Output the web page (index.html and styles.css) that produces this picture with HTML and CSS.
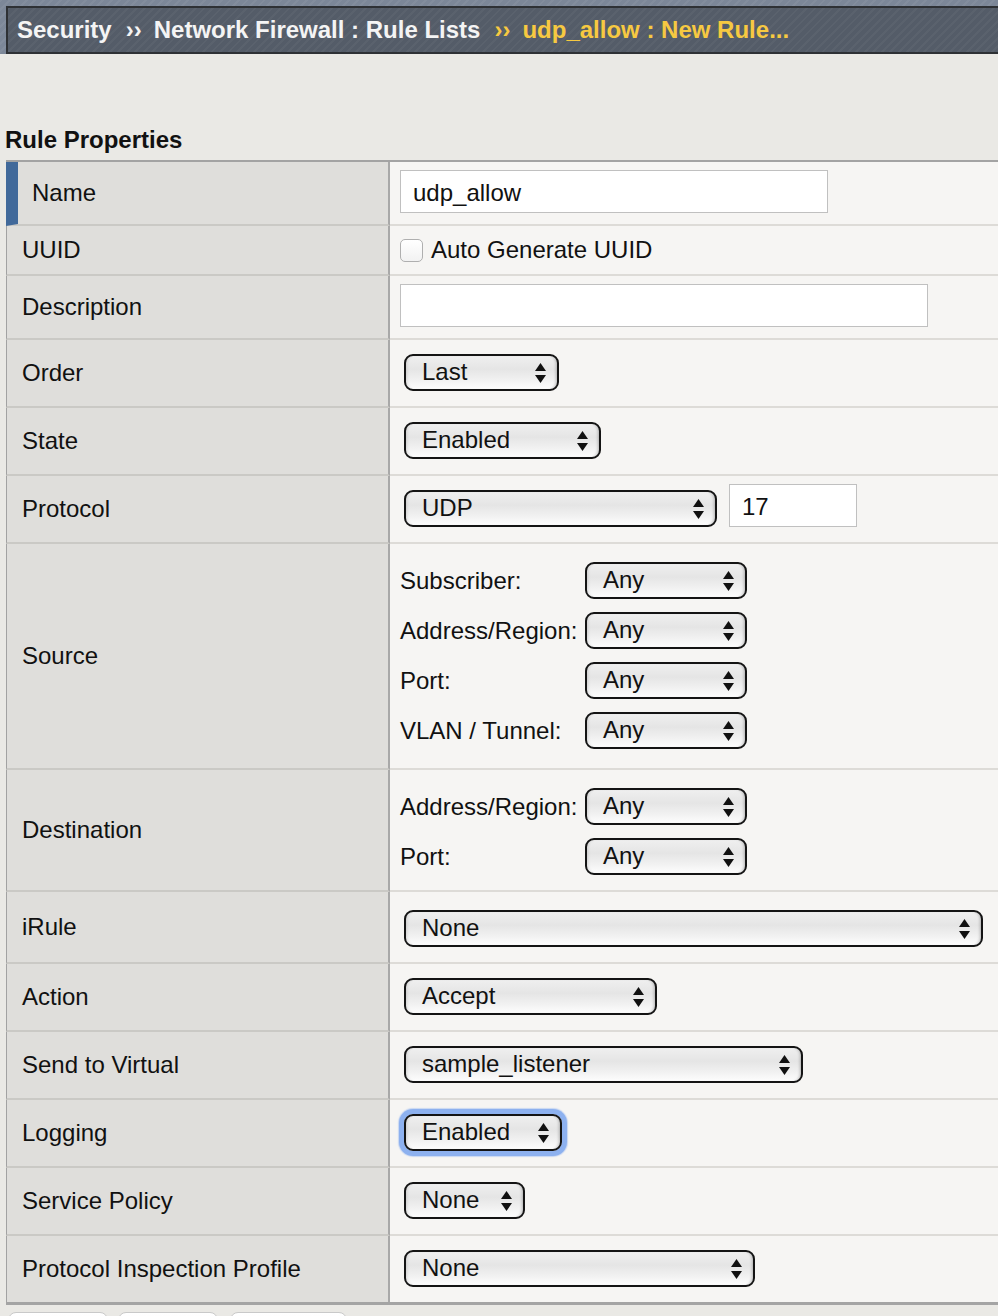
FILE: index.html
```html
<!DOCTYPE html>
<html lang="en">
<head>
<meta charset="utf-8">
<title>udp_allow : New Rule...</title>
<link rel="stylesheet" href="styles.css">
</head>
<body>
<header class="topbar">
  <nav class="crumbs">
    <span class="crumb">Security</span><span class="sep">&rsaquo;&rsaquo;</span><span class="crumb">Network Firewall : Rule Lists</span><span class="sep sep-current">&rsaquo;&rsaquo;</span><span class="crumb crumb-current">udp_allow : New Rule...</span>
  </nav>
</header>

<main class="content">
  <h2 class="section-title">Rule Properties</h2>

  <div class="props">
    <div class="row row-name">
      <div class="lbl">Name</div>
      <div class="val val-input"><input class="text-input input-name" type="text" value="udp_allow"></div>
    </div>

    <div class="row">
      <div class="lbl">UUID</div>
      <div class="val val-check"><span class="checkbox"></span><span class="check-label">Auto Generate UUID</span></div>
    </div>

    <div class="row">
      <div class="lbl">Description</div>
      <div class="val val-input"><input class="text-input input-desc" type="text" value=""></div>
    </div>

    <div class="row">
      <div class="lbl">Order</div>
      <div class="val val-select">
        <div class="sel sel-order"><span class="sel-text">Last</span><svg class="arrows" viewBox="0 0 11 20" width="11" height="20"><path d="M0 8 L5.5 0 L11 8Z M0 12 L11 12 L5.5 20Z"/></svg></div>
      </div>
    </div>

    <div class="row">
      <div class="lbl">State</div>
      <div class="val val-select">
        <div class="sel sel-state"><span class="sel-text">Enabled</span><svg class="arrows" viewBox="0 0 11 20" width="11" height="20"><path d="M0 8 L5.5 0 L11 8Z M0 12 L11 12 L5.5 20Z"/></svg></div>
      </div>
    </div>

    <div class="row">
      <div class="lbl">Protocol</div>
      <div class="val val-protocol">
        <div class="sel sel-protocol"><span class="sel-text">UDP</span><svg class="arrows" viewBox="0 0 11 20" width="11" height="20"><path d="M0 8 L5.5 0 L11 8Z M0 12 L11 12 L5.5 20Z"/></svg></div>
        <input class="text-input input-proto" type="text" value="17">
      </div>
    </div>

    <div class="row">
      <div class="lbl">Source</div>
      <div class="val val-group">
        <div class="subgrid">
          <span class="sub-label">Subscriber:</span>
          <div class="sel sel-any"><span class="sel-text">Any</span><svg class="arrows" viewBox="0 0 11 20" width="11" height="20"><path d="M0 8 L5.5 0 L11 8Z M0 12 L11 12 L5.5 20Z"/></svg></div>
          <span class="sub-label">Address/Region:</span>
          <div class="sel sel-any"><span class="sel-text">Any</span><svg class="arrows" viewBox="0 0 11 20" width="11" height="20"><path d="M0 8 L5.5 0 L11 8Z M0 12 L11 12 L5.5 20Z"/></svg></div>
          <span class="sub-label">Port:</span>
          <div class="sel sel-any"><span class="sel-text">Any</span><svg class="arrows" viewBox="0 0 11 20" width="11" height="20"><path d="M0 8 L5.5 0 L11 8Z M0 12 L11 12 L5.5 20Z"/></svg></div>
          <span class="sub-label">VLAN / Tunnel:</span>
          <div class="sel sel-any"><span class="sel-text">Any</span><svg class="arrows" viewBox="0 0 11 20" width="11" height="20"><path d="M0 8 L5.5 0 L11 8Z M0 12 L11 12 L5.5 20Z"/></svg></div>
        </div>
      </div>
    </div>

    <div class="row">
      <div class="lbl">Destination</div>
      <div class="val val-group val-dest">
        <div class="subgrid">
          <span class="sub-label">Address/Region:</span>
          <div class="sel sel-any"><span class="sel-text">Any</span><svg class="arrows" viewBox="0 0 11 20" width="11" height="20"><path d="M0 8 L5.5 0 L11 8Z M0 12 L11 12 L5.5 20Z"/></svg></div>
          <span class="sub-label">Port:</span>
          <div class="sel sel-any"><span class="sel-text">Any</span><svg class="arrows" viewBox="0 0 11 20" width="11" height="20"><path d="M0 8 L5.5 0 L11 8Z M0 12 L11 12 L5.5 20Z"/></svg></div>
        </div>
      </div>
    </div>

    <div class="row">
      <div class="lbl">iRule</div>
      <div class="val val-select val-irule">
        <div class="sel sel-irule"><span class="sel-text">None</span><svg class="arrows" viewBox="0 0 11 20" width="11" height="20"><path d="M0 8 L5.5 0 L11 8Z M0 12 L11 12 L5.5 20Z"/></svg></div>
      </div>
    </div>

    <div class="row">
      <div class="lbl">Action</div>
      <div class="val val-select">
        <div class="sel sel-action"><span class="sel-text">Accept</span><svg class="arrows" viewBox="0 0 11 20" width="11" height="20"><path d="M0 8 L5.5 0 L11 8Z M0 12 L11 12 L5.5 20Z"/></svg></div>
      </div>
    </div>

    <div class="row">
      <div class="lbl">Send to Virtual</div>
      <div class="val val-select">
        <div class="sel sel-virtual"><span class="sel-text">sample_listener</span><svg class="arrows" viewBox="0 0 11 20" width="11" height="20"><path d="M0 8 L5.5 0 L11 8Z M0 12 L11 12 L5.5 20Z"/></svg></div>
      </div>
    </div>

    <div class="row">
      <div class="lbl">Logging</div>
      <div class="val val-select">
        <div class="sel sel-logging is-focused"><span class="sel-text">Enabled</span><svg class="arrows" viewBox="0 0 11 20" width="11" height="20"><path d="M0 8 L5.5 0 L11 8Z M0 12 L11 12 L5.5 20Z"/></svg></div>
      </div>
    </div>

    <div class="row">
      <div class="lbl">Service Policy</div>
      <div class="val val-select">
        <div class="sel sel-service"><span class="sel-text">None</span><svg class="arrows" viewBox="0 0 11 20" width="11" height="20"><path d="M0 8 L5.5 0 L11 8Z M0 12 L11 12 L5.5 20Z"/></svg></div>
      </div>
    </div>

    <div class="row row-last">
      <div class="lbl">Protocol Inspection Profile</div>
      <div class="val val-select">
        <div class="sel sel-pip"><span class="sel-text">None</span><svg class="arrows" viewBox="0 0 11 20" width="11" height="20"><path d="M0 8 L5.5 0 L11 8Z M0 12 L11 12 L5.5 20Z"/></svg></div>
      </div>
    </div>
  </div>

  <div class="actions">
    <button class="btn" type="button"><span class="btn-label">Cancel</span></button>
    <button class="btn" type="button"><span class="btn-label">Repeat</span></button>
    <button class="btn btn-wide" type="button"><span class="btn-label">Finished</span></button>
  </div>
</main>
</body>
</html>
```

FILE: styles.css
```css
html, body {
  margin: 0;
  padding: 0;
}

body {
  background: #eae9e5;
  font-family: "Liberation Sans", Arial, Helvetica, sans-serif;
  font-size: 24px;
  color: #111;
  overflow-x: hidden;
}

/* ---------- breadcrumb header ---------- */
.topbar {
  background-color: #7c8798;
  background-image: repeating-linear-gradient(135deg, rgba(255,255,255,0.05) 0 2px, rgba(0,0,0,0) 2px 6px);
  padding: 6px 0 0 6px;
}

.crumbs {
  box-sizing: border-box;
  height: 48px;
  border: 2px solid #2e3135;
  border-right: none;
  background-color: #545c68;
  background-image: repeating-linear-gradient(135deg, rgba(255,255,255,0.035) 0 2px, rgba(0,0,0,0) 2px 6px);
  padding-left: 9px;
  line-height: 43px;
  font-weight: bold;
  font-size: 24px;
  color: #f4f4f4;
  white-space: nowrap;
}

.sep {
  margin: 0 12px 0 14px;
}

.sep-current,
.crumb-current {
  color: #f7c941;
}

/* ---------- section ---------- */
.content {
  padding: 0;
}

.section-title {
  margin: 0;
  padding: 72px 0 0 5px;
  font-size: 24px;
  line-height: 28px;
  font-weight: bold;
  color: #111;
}

.props {
  margin: 6px 0 0 6px;
  border-top: 2px solid #a3a3a3;
  border-bottom: 3px solid #a4a4a4;
}

.row {
  display: grid;
  grid-template-columns: 384px 1fr;
}

.lbl {
  box-sizing: border-box;
  display: flex;
  align-items: center;
  background: #dfdedb;
  border-left: 1px solid #a2a2a2;
  border-right: 2px solid #a8a8a8;
  border-bottom: 2px solid #cac9c5;
  padding-left: 15px;
  line-height: 28px;
}

.row-name .lbl {
  border-left: 12px solid #41699a;
  padding-left: 14px;
}

.val {
  display: flex;
  align-items: center;
  background: #f6f5f3;
  border-bottom: 2px solid #dddbd7;
  padding-left: 10px;
}

.row-last .lbl,
.row-last .val {
  border-bottom: none;
}

.val-input {
  padding-top: 8px;
  padding-bottom: 11px;
}

.val-check {
  padding-top: 10px;
  padding-bottom: 10px;
  line-height: 28px;
}

.val-select {
  padding-top: 14px;
  padding-bottom: 15px;
  padding-left: 14px;
}

.val-irule {
  padding-top: 18px;
}

.val-protocol {
  align-items: flex-end;
  padding-top: 8px;
  padding-bottom: 15px;
  padding-left: 14px;
}

.val-group {
  padding-top: 18px;
  padding-bottom: 19px;
}

.val-dest {
  padding-bottom: 15px;
}

/* ---------- inputs ---------- */
.text-input {
  box-sizing: border-box;
  height: 43px;
  margin: 0;
  border: 1px solid #c0c0c0;
  border-radius: 0;
  background: #fff;
  padding: 3px 12px 0;
  font-family: "Liberation Sans", Arial, Helvetica, sans-serif;
  font-size: 24px;
  color: #111;
  outline: none;
}

.input-name { width: 428px; }
.input-desc { width: 528px; }
.input-proto { width: 128px; margin-left: 12px; }

.checkbox {
  box-sizing: border-box;
  width: 23px;
  height: 23px;
  border: 1px solid #afafaf;
  border-radius: 5px;
  background: linear-gradient(#ffffff, #f2f2f2);
  margin-right: 8px;
  flex: none;
}

/* ---------- select-like controls ---------- */
.sel {
  box-sizing: border-box;
  display: flex;
  align-items: center;
  height: 37px;
  border: 2px solid #141414;
  border-radius: 9px;
  padding: 0 11px 0 16px;
  background: linear-gradient(to bottom, #efefef 0%, #e5e5e5 40%, #f0f0f0 70%, #fdfdfd 100%);
  box-shadow: inset -3px 0 3px -2px rgba(0,0,0,0.25), inset 3px 0 3px -2px rgba(0,0,0,0.12);
  white-space: nowrap;
}

.sel-text {
  line-height: 27px;
  padding-bottom: 2px;
}

.arrows {
  margin-left: auto;
  flex: none;
  fill: #111;
}

.sel-order { width: 155px; }
.sel-state { width: 197px; }
.sel-protocol { width: 313px; }
.sel-any { width: 162px; }
.sel-irule { width: 579px; }
.sel-action { width: 253px; }
.sel-virtual { width: 399px; }
.sel-logging { width: 158px; }
.sel-service { width: 121px; }
.sel-pip { width: 351px; }

.is-focused {
  box-shadow: 0 0 0 5px #8db1ef, 0 0 1px 6px rgba(141,177,239,0.45),
              inset -3px 0 3px -2px rgba(0,0,0,0.25), inset 3px 0 3px -2px rgba(0,0,0,0.12);
}

/* ---------- source / destination sub grid ---------- */
.subgrid {
  display: grid;
  grid-template-columns: 185px auto;
  row-gap: 13px;
  align-items: center;
}

.sub-label {
  line-height: 28px;
  white-space: nowrap;
}

/* ---------- bottom buttons ---------- */
.actions {
  display: flex;
  gap: 10px;
  padding: 7px 0 12px 8px;
}

.btn {
  box-sizing: border-box;
  display: flex;
  align-items: flex-end;
  justify-content: center;
  width: 100px;
  height: 44px;
  padding: 0 0 8px;
  border: 1px solid #c9c9c9;
  border-radius: 8px;
  background: linear-gradient(#ffffff, #f3f3f3);
  font-family: "Liberation Sans", Arial, Helvetica, sans-serif;
  font-size: 20px;
  color: #111;
}

.btn-label {
  line-height: 23px;
}

.btn-wide {
  width: 117px;
  margin-left: 2px;
}
```
